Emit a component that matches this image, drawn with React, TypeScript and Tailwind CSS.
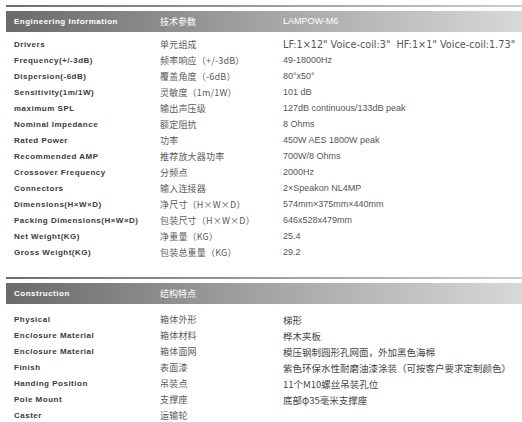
const specs: [string, string, string][] = [
  ["Drivers", "单元组成", ""],
  ["Frequency(+/-3dB)", "频率响应（+/-3dB）", "49-18000Hz"],
  ["Dispersion(-6dB)", "覆盖角度（-6dB）", "80°x50°"],
  ["Sensitivity(1m/1W)", "灵敏度（1m/1W）", "101 dB"],
  ["maximum SPL", "输出声压级", "127dB continuous/133dB peak"],
  ["Nominal Impedance", "额定阻抗", "8 Ohms"],
  ["Rated Power", "功率", "450W AES 1800W peak"],
  ["Recommended  AMP", "推荐放大器功率", "700W/8 Ohms"],
  ["Crossover Frequency", "分频点", "2000Hz"],
  ["Connectors", "输入连接器", "2×Speakon NL4MP"],
  ["Dimensions(H×W×D)", "净尺寸（H×W×D）", "574mm×375mm×440mm"],
  ["Packing Dimensions(H×W×D)", "包装尺寸（H×W×D）", "646x528x479mm"],
  ["Net Weight(KG)", "净重量（KG）", "25.4"],
  ["Gross Weight(KG)", "包装总重量（KG）", "29.2"],
]

const construction: [string, string, string][] = [
  ["Physical", "箱体外形", "梯形"],
  ["Enclosure Material", "箱体材料", "桦木夹板"],
  ["Enclosure Material", "箱体面网", "模压钢制圆形孔网面，外加黑色海棉"],
  ["Finish", "表面漆", "紫色环保水性耐磨油漆涂装（可按客户要求定制颜色）"],
  ["Handing Position", "吊装点", "11个M10螺丝吊装孔位"],
  ["Pole Mount", "支撑座", "底部φ35毫米支撑座"],
  ["Caster", "运输轮", ""],
]

const label = "w-[146px] shrink-0 font-['Liberation_Sans',Arial,sans-serif] font-bold text-[8px] tracking-[0.5px] text-[#3a3a3a]"
const cn = "w-[123px] shrink-0 font-['Noto_Sans_CJK_SC',sans-serif] text-[9px] tracking-[0.2px] text-[#5a5a5a]"

function Header({ en, zh, model }: { en: string, zh: string, model?: string }) {
  return <div className="pl-[6px]">
    <div className="h-[2px] bg-gradient-to-r from-[#6e6e6e] to-[#cdcdcd]" />
    <div className="mt-[4px] h-[21px] flex items-center pl-[8px] bg-gradient-to-r from-[#6a6a6a] via-[#a4a4a4] to-[#d8d8d8] text-white">
      <span className="w-[146px] shrink-0 font-['Liberation_Sans',Arial,sans-serif] font-bold text-[8px] tracking-[0.5px]">{en}</span>
      <span className="w-[123px] shrink-0 font-['Noto_Sans_CJK_SC',sans-serif] text-[9px]">{zh}</span>
      {model && <span className="font-['Liberation_Sans',Arial,sans-serif] text-[9px]">{model}</span>}
    </div>
  </div>
}

export default function App() {
  return <div className="w-[522px] h-[422px] bg-white overflow-hidden pt-[5px]">
    <Header en="Engineering Information" zh="技术参数" model="LAMPOW-M6" />
    <div className="pt-[5px] pl-[14px]">
      {specs.map(([en, zh, v], i) => (
        <div key={i} className="h-[16px] flex items-center">
          <span className={label}>{en}</span>
          <span className={cn}>{zh}</span>
          {i === 0
            ? <span className="font-['DejaVu_Sans',sans-serif] text-[9.7px] text-[#555] whitespace-pre">LF:1×12" Voice-coil:3"  HF:1×1" Voice-coil:1.73"</span>
            : <span className="font-['Liberation_Sans',Arial,sans-serif] text-[9px] text-[#555]">{v}</span>}
        </div>
      ))}
    </div>
    <div className="mt-[16px]">
      <Header en="Construction" zh="结构特点" />
    </div>
    <div className="pt-[8px] pl-[14px]">
      {construction.map(([en, zh, v], i) => (
        <div key={i} className="h-[16px] flex items-center">
          <span className={label}>{en}</span>
          <span className={cn}>{zh}</span>
          <span className="font-['Noto_Sans_CJK_SC',sans-serif] text-[9.5px] text-[#444]">{v}</span>
        </div>
      ))}
    </div>
  </div>
}
